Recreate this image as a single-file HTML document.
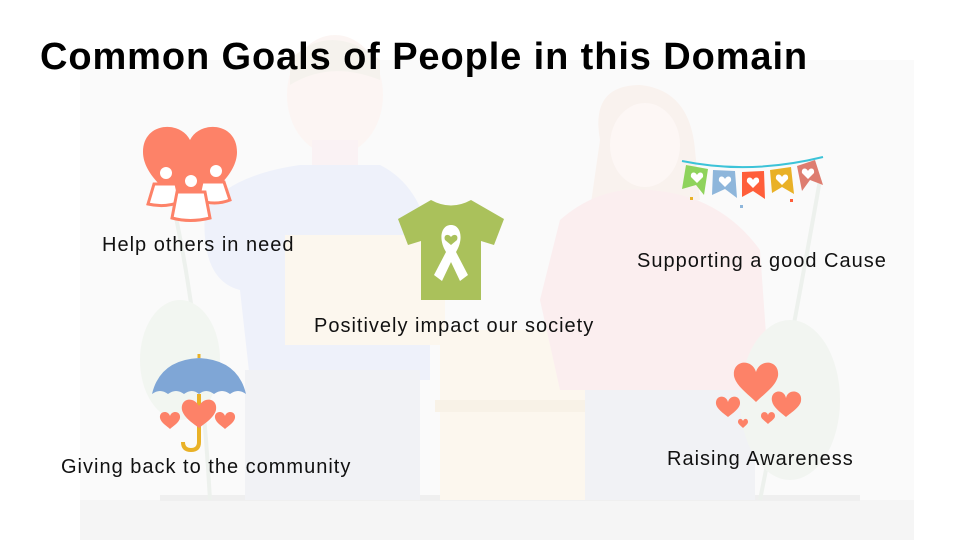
<!DOCTYPE html>
<html><head><meta charset="utf-8"><style>
*{margin:0;padding:0;box-sizing:border-box}
body{width:960px;height:540px;overflow:hidden;background:#fff;position:relative;font-family:"Liberation Sans",sans-serif}
.a{position:absolute}
h1{position:absolute;left:40px;top:36px;font-size:38px;font-weight:bold;color:#000;letter-spacing:0.9px;white-space:nowrap}
.l{position:absolute;font-size:20px;color:#111;white-space:nowrap;letter-spacing:1px}
</style></head><body>
<svg class="a" style="left:0;top:0;opacity:0.6" width="960" height="540">
<rect x="80" y="60" width="834" height="480" fill="#f7f7f7"/>
<rect x="80" y="500" width="834" height="40" fill="#efefef"/>
<rect x="160" y="495" width="700" height="6" fill="#e6e6e6"/>
<ellipse cx="335" cy="95" rx="48" ry="60" fill="#fbf0ec"/>
<path d="M290 60 Q330 20 380 60 L380 80 Q330 60 290 85Z" fill="#f0ebe2"/>
<rect x="312" y="140" width="46" height="40" fill="#f8ebee"/>
<path d="M205 210 Q230 175 300 165 L380 165 Q420 185 430 240 L430 380 L250 380 L240 290 Q200 280 205 210Z" fill="#e3e9f8"/>
<rect x="245" y="370" width="175" height="130" fill="#e8eaef"/>
<rect x="285" y="235" width="160" height="110" fill="#fbf2e4"/>
<rect x="440" y="330" width="150" height="170" fill="#fbf2e4"/>
<rect x="435" y="400" width="160" height="12" fill="#f5ead8"/>
<path d="M600 140 Q590 85 640 85 Q690 90 695 150 L700 200 L590 210Z" fill="#f6ebe4"/>
<ellipse cx="645" cy="145" rx="35" ry="42" fill="#fcf2ef"/>
<path d="M560 220 Q600 185 650 190 Q720 195 760 250 L770 390 L560 390 L540 300Z" fill="#fae4e6"/>
<rect x="585" y="390" width="170" height="110" fill="#e8eaef"/>
<path d="M170 190 Q200 320 210 500" stroke="#e2e9e2" stroke-width="4" fill="none"/>
<ellipse cx="180" cy="360" rx="40" ry="60" fill="#eaf1e8"/>
<path d="M820 180 Q790 350 760 500" stroke="#e2e9e2" stroke-width="4" fill="none"/>
<ellipse cx="790" cy="400" rx="50" ry="80" fill="#eaf0e8"/>
</svg>

<h1>Common Goals of People in this Domain</h1>

<svg class="a" style="left:140px;top:120px" width="100" height="105" viewBox="0 0 100 105">
<path d="M50 20 C40 0 3 2 3 32 C3 55 30 75 50 90 C70 75 97 55 97 32 C97 2 60 0 50 20Z" fill="#fd8268"/>
<circle cx="26" cy="53" r="6" fill="#fff"/><circle cx="51" cy="61" r="6" fill="#fff"/><circle cx="76" cy="51" r="6" fill="#fff"/>
<path d="M8 84 L14 64 L36 64 L40 82 Q25 88 8 84Z" fill="#fff" stroke="#fd8268" stroke-width="3"/>
<path d="M58 80 L62 62 L84 62 L90 80 Q75 86 58 80Z" fill="#fff" stroke="#fd8268" stroke-width="3"/>
<path d="M32 98 L37 72 L65 72 L70 98 Q50 103 32 98Z" fill="#fff" stroke="#fd8268" stroke-width="3"/>
</svg>
<div class="l" style="left:102px;top:234px">Help others in need</div>

<svg class="a" style="left:396px;top:197px" width="110" height="105" viewBox="0 0 110 105">
<path d="M35 3 Q55 14 75 3 L108 22 L98 48 L85 44 L85 103 L25 103 L25 44 L12 48 L2 22Z" fill="#aac15b"/>
<path d="M55 28 C45 28 42 42 50 55 L38 78 L46 84 L55 65 L64 84 L72 78 L60 55 C68 42 65 28 55 28Z" fill="#fff"/>
<path d="M55 40 C52 36 47 38 49 43 L55 48 L61 43 C63 38 58 36 55 40Z" fill="#aac15b"/>
</svg>
<div class="l" style="left:314px;top:315px">Positively impact our society</div>

<svg class="a" style="left:680px;top:155px" width="145" height="60" viewBox="0 0 145 60">
<path d="M2 6 Q70 20 143 2" stroke="#3cc3d8" stroke-width="2" fill="none"/>
<path d="M6 10 L28 14 L24 40 L16 30 L2 34Z" fill="#8fd35c"/>
<path d="M33 15 L55 16 L57 43 L45 34 L32 40Z" fill="#8eb6db"/>
<path d="M62 17 L84 16 L85 44 L73 36 L62 42Z" fill="#ff5e3a"/>
<path d="M90 15 L111 12 L114 39 L102 32 L92 38Z" fill="#e9b127"/>
<path d="M117 11 L135 5 L143 30 L130 25 L122 36Z" fill="#de7d70"/>
<g fill="#fff"><path d="M17 20 C15 16 10 17 11 22 L17 28 L23 22 C24 17 19 16 17 20Z"/><path d="M45 24 C43 20 38 21 39 26 L45 32 L51 26 C52 21 47 20 45 24Z"/><path d="M73 25 C71 21 66 22 67 27 L73 33 L79 27 C80 22 75 21 73 25Z"/><path d="M102 22 C100 18 95 19 96 24 L102 30 L108 24 C109 19 104 18 102 22Z"/><path d="M128 16 C126 12 121 13 122 18 L128 24 L134 18 C135 13 130 12 128 16Z"/></g>
<g fill="#e9b127"><rect x="10" y="42" width="3" height="3"/><rect x="60" y="50" width="3" height="3" fill="#8eb6db"/><rect x="110" y="44" width="3" height="3" fill="#ff5e3a"/></g>
</svg>
<div class="l" style="left:637px;top:250px">Supporting a good Cause</div>

<svg class="a" style="left:150px;top:352px" width="98" height="102" viewBox="0 0 98 102">
<path d="M2 42 Q10 8 49 6 Q88 8 96 42 Q88 36 80 42 Q72 36 64 42 Q56 36 49 42 Q42 36 34 42 Q26 36 18 42 Q10 36 2 42Z" fill="#7fa6d6"/>
<path d="M49 2 L49 6" stroke="#e9b127" stroke-width="3"/>
<path d="M49 42 L49 90 Q49 98 41 98 Q33 98 33 90" stroke="#e9b127" stroke-width="4" fill="none"/>
<g fill="#fd8268">
<path d="M49 54 C44 44 30 46 32 58 C34 66 44 72 49 76 C54 72 64 66 66 58 C68 46 54 44 49 54Z"/>
<path d="M20 64 C18 58 9 59 10 66 C11 71 17 74 20 77 C23 74 29 71 30 66 C31 59 22 58 20 64Z"/>
<path d="M75 64 C73 58 64 59 65 66 C66 71 72 74 75 77 C78 74 84 71 85 66 C86 59 77 58 75 64Z"/>
</g>
</svg>
<div class="l" style="left:61px;top:456px">Giving back to the community</div>

<svg class="a" style="left:714px;top:360px" width="92" height="72" viewBox="0 0 92 72">
<g fill="#fd8268">
<path d="M42 12 C38 -2 18 0 20 16 C22 26 34 34 42 42 C50 34 62 26 64 16 C66 0 46 -2 42 12Z"/>
<path d="M72 38 C70 28 56 30 58 41 C59 47 66 52 72 57 C78 52 86 47 87 41 C89 30 74 28 72 38Z"/>
<path d="M14 42 C12 34 1 35 2 44 C3 49 9 53 14 57 C19 53 25 49 26 44 C27 35 16 34 14 42Z"/>
<path d="M29 61 C28 58 24 58 24 62 C24 64 27 66 29 68 C31 66 34 64 34 62 C34 58 30 58 29 61Z"/>
<path d="M54 55 C53 51 47 51 47 56 C47 59 51 61 54 64 C57 61 61 59 61 56 C61 51 55 51 54 55Z"/>
</g>
</svg>
<div class="l" style="left:667px;top:448px">Raising Awareness</div>
</body></html>
